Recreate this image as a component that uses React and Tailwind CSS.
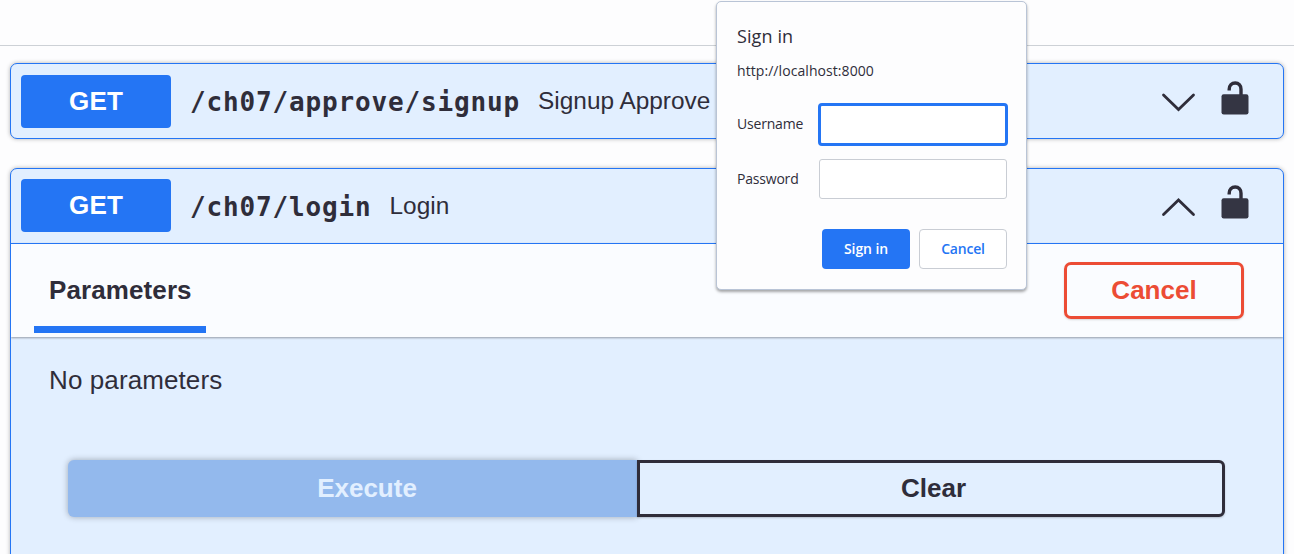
const boxShadow = 'shadow-[0_0_4px_rgba(0,0,0,0.3)]';

function Chevron({ up }) {
  return (
    <svg className="h-5 w-9" viewBox="0 0 36 20" fill="none" stroke="#2f2d3a" strokeWidth="2.8" strokeLinecap="round" strokeLinejoin="miter">
      {up ? <path d="M2.500 17.500 17.500 3 32.500 17.500" /> : <path d="M2.500 3 17.500 17.500 32.500 3" />}
    </svg>
  );
}

function OpenLock() {
  return (
    <svg className="h-[34px] w-7" viewBox="0 0 28 34">
      <path d="M8.200 9.500V8.200C8.200 4.600 10.700 2 14.200 2s5.800 2.600 5.800 6.200V15" fill="none" stroke="#2f2d3a" strokeWidth="3.4" />
      <rect x="0.500" y="13.300" width="27" height="20.200" rx="2.200" fill="#343543" />
    </svg>
  );
}

function OperationHeader({ path, summary, open }) {
  return (
    <div className="flex h-[74px] items-center pl-[10px] pr-[34px]">
      <div className={`flex h-[53px] w-[150px] items-center justify-center rounded-[4px] bg-[#2475f4] text-[26px] font-bold leading-none tracking-[0.2px] text-white ${open ? 'mb-[2px]' : 'mb-0'}`}>GET</div>
      <span className="ml-[19px] mt-px whitespace-pre font-['DejaVu_Sans_Mono',monospace] text-[26px] font-bold leading-none tracking-[0.85px]">{path}</span>
      <span className="ml-[18px] mt-px whitespace-pre text-[24.4px] leading-none">{summary}</span>
      <span className={`ml-auto mr-[24px] ${open ? 'mt-px' : 'mt-[2px]'}`}><Chevron up={open} /></span>
      <span className={open ? 'mb-[9px]' : 'mb-[7px]'}><OpenLock /></span>
    </div>
  );
}

function SignInDialog() {
  return (
    <div className="absolute left-[716px] top-px flex h-[289px] w-[311px] flex-col rounded-[5px] border border-[#b9c4d6] bg-[#fdfdfe] pl-5 pr-[19px] font-['Open_Sans',sans-serif] text-[14px] leading-none tracking-[-0.2px] shadow-[0_2px_3px_rgba(0,0,0,0.35)]">
      <div className="mt-[25px] text-[18px] tracking-[0.1px]">Sign in</div>
      <div className="mt-[19px] tracking-[0.07px]">http://localhost:8000</div>
      <label className="mt-[25px] flex h-[42px] items-center">
        <span className="w-[81px] shrink-0">Username</span>
        <input aria-label="Username" className="-mr-px h-[43px] w-[190px] shrink-0 rounded-[4px] border-[3px] border-[#2475f4] bg-white" />
      </label>
      <label className="mt-[14px] flex h-10 items-center">
        <span className="w-[82px] shrink-0">Password</span>
        <input aria-label="Password" className="-mr-px h-10 w-[188px] shrink-0 rounded-[3px] border border-[#c9cdd4] bg-white" />
      </label>
      <div className="mt-[30px] flex justify-end gap-[9px] font-semibold">
        <button className="h-10 w-[88px] rounded-[4px] bg-[#2475f4] text-[14px] tracking-[-0.1px] text-white">Sign in</button>
        <button className="h-10 w-[88px] rounded-[4px] border border-[#c9cdd4] bg-white text-[14px] tracking-[-0.2px] text-[#2475f4]">Cancel</button>
      </div>
    </div>
  );
}

export default function App() {
  return (
    <div className="relative h-[554px] w-[1294px] overflow-hidden bg-[#fdfdfe] font-['Liberation_Sans',sans-serif] text-[#2f2d3a]">
      <div className="h-[46px] border-b border-[#cdd1d6]" />
      <main className="pl-[10px] pr-[10px] pt-[17px]">
        <section className={`h-[76px] rounded-[7px] border border-[#2475f4] bg-[#e2efff] ${boxShadow}`}>
          <OperationHeader path="/ch07/approve/signup" summary="Signup Approve" />
        </section>
        <section className={`mt-[29px] h-[420px] overflow-hidden rounded-[7px] border border-[#2475f4] bg-[#e2efff] ${boxShadow}`}>
          <OperationHeader path="/ch07/login" summary="Login" open />
          <div className="relative flex h-[94px] justify-between border-t border-[#2475f4] bg-[#fafcff] pl-[23px] pr-[39px] shadow-[0_1px_2px_rgba(0,0,0,0.35)]">
            <div className="flex h-[89px] w-[172px] flex-col border-b-[7px] border-[#2475f4] pl-[15px] pt-[33px] text-[26px] font-bold leading-none tracking-[0.1px]">Parameters</div>
            <button className="mt-[18px] h-[57px] w-[180px] rounded-[7px] border-[3px] border-[#ec4c35] pb-[2px] text-[26px] font-bold leading-none text-[#ec4c35] shadow-[0_1px_2px_rgba(0,0,0,0.15)]">Cancel</button>
          </div>
          <p className="mt-[30px] pl-[38px] text-[26px] leading-none tracking-[0.1px]">No parameters</p>
          <div className="mt-[67px] flex h-[57px] pl-[57px] text-[26px] font-bold leading-none">
            <button className="w-[569px] rounded-l-[6px] bg-[#93b9ed] pb-[2px] pl-[29px] text-[#e2efff] shadow-[0_0_6px_rgba(0,0,0,0.3)]">Execute</button>
            <button className="relative w-[588px] rounded-r-[6px] border-[3px] border-[#2f2d3a] bg-[#e2efff] pb-[2px] pl-[5px] shadow-[0_1px_2px_rgba(0,0,0,0.2)]">Clear</button>
          </div>
        </section>
      </main>
      <SignInDialog />
    </div>
  );
}
